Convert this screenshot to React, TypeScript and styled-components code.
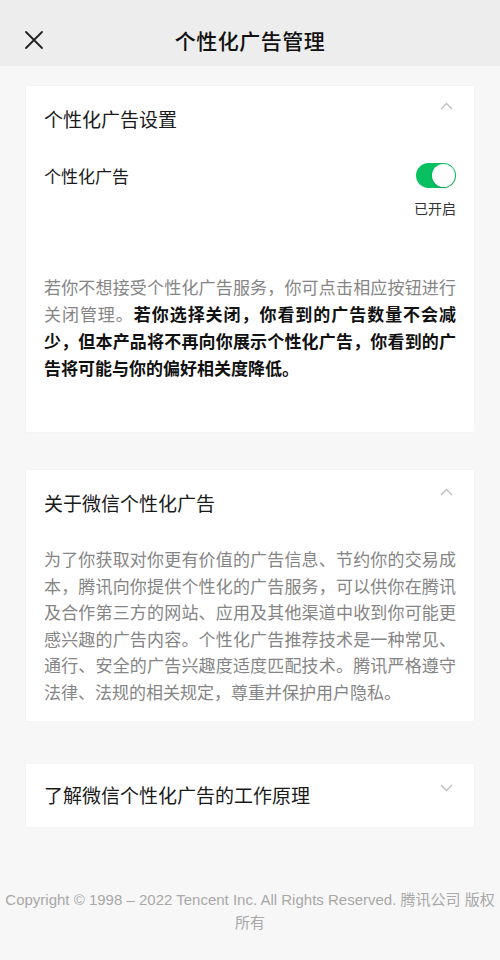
import React, { useState } from 'react'
import styled, { createGlobalStyle } from 'styled-components'

const GlobalStyle = createGlobalStyle`
    html, body {
        margin: 0;
        padding: 0;
        background: #f7f7f7;
        font-family: 'Noto Sans CJK SC', 'Noto Sans', sans-serif;
    }
`

const Page = styled.div`
    min-height: 960px;
    background: #f7f7f7;
`

const Header = styled.div`
    height: 66px;
    box-sizing: border-box;
    padding-top: 14px;
    background: #ededed;
    position: relative;
`

const HeaderRow = styled.div`
    height: 52px;
    display: flex;
    align-items: center;
    justify-content: center;
    position: relative;
`

const CloseButton = styled.button`
    position: absolute;
    left: 20px;
    top: 12px;
    width: 28px;
    height: 28px;
    border: none;
    background: none;
    padding: 0;
    display: flex;
    align-items: center;
    justify-content: center;
`

const HeaderTitle = styled.div`
    font-size: 21px;
    font-weight: 500;
    color: #111;
    letter-spacing: 0.5px;
`

const Main = styled.div`
    padding: 20px 26px 0;
    display: flex;
    flex-direction: column;
`

type CardProps = {
    $pad: string
    $gap?: number
}

const Card = styled.div<CardProps>`
    background: #fff;
    padding: ${(p) => p.$pad};
    margin-bottom: ${(p) => p.$gap ?? 0}px;
    box-shadow: 0 0 2px rgba(0, 0, 0, 0.04);
`

const CardHead = styled.div`
    display: flex;
    justify-content: space-between;
    align-items: flex-start;
`

const CardTitle = styled.div`
    font-size: 19px;
    line-height: 26px;
    color: #1a1a1a;
`

const Chevron = styled.div<{ $top: number }>`
    margin-top: ${(p) => p.$top}px;
    margin-right: 3px;
    width: 13px;
    height: 8px;
    display: flex;
`

const SettingRow = styled.div`
    margin-top: 31px;
    display: flex;
    justify-content: space-between;
    align-items: center;
`

const SettingLabel = styled.div`
    font-size: 17px;
    line-height: 24px;
    color: #1a1a1a;
`

const Toggle = styled.div<{ $on: boolean }>`
    width: 40px;
    height: 25px;
    border-radius: 13px;
    background: ${(p) => (p.$on ? '#07c160' : '#e5e5e5')};
    position: relative;
    cursor: pointer;
    transition: background 200ms;
`

const Knob = styled.div<{ $on: boolean }>`
    position: absolute;
    top: 1px;
    left: ${(p) => (p.$on ? '16px' : '1px')};
    width: 23px;
    height: 23px;
    border-radius: 50%;
    background: #fff;
    box-shadow: 0 1px 2px rgba(0, 0, 0, 0.2);
    transition: left 200ms;
`

const Status = styled.div`
    margin-top: 10px;
    text-align: right;
    font-size: 14px;
    line-height: 20px;
    color: #333;
`

const Paragraph = styled.p<{ $top: number; $lh: number }>`
    margin: ${(p) => p.$top}px 0 0;
    font-size: 17px;
    line-height: ${(p) => p.$lh}px;
    color: #858585;
    text-align: justify;
`

const Strong = styled.span`
    color: #111;
    font-weight: 700;
`

const Footer = styled.div`
    margin-top: 61px;
    padding: 0 4px;
    text-align: center;
    font-family: 'Liberation Sans', 'Noto Sans CJK SC', sans-serif;
    font-size: 15px;
    line-height: 23px;
    color: #a8a8a8;
`

const CloseIcon = () => (
    <svg width="20" height="20" viewBox="0 0 20 20">
        <path
            d="M2 2 L18 18 M18 2 L2 18"
            stroke="#1f1f1f"
            strokeWidth="1.8"
            strokeLinecap="round"
        />
    </svg>
)

const ChevronIcon = ({ up }: { up: boolean }) => (
    <svg width="13" height="8" viewBox="0 0 13 8">
        <path
            d={up ? 'M1 7 L6.5 1.5 L12 7' : 'M1 1 L6.5 6.5 L12 1'}
            fill="none"
            stroke="#bdbdbd"
            strokeWidth="1.3"
        />
    </svg>
)

const App = () => {
    const [on, setOn] = useState(true)
    return (
        <Page>
            <GlobalStyle />
            <Header>
                <HeaderRow>
                    <CloseButton>
                        <CloseIcon />
                    </CloseButton>
                    <HeaderTitle>个性化广告管理</HeaderTitle>
                </HeaderRow>
            </Header>
            <Main>
                <Card $pad="20px 18px 51px" $gap={38}>
                    <CardHead>
                        <CardTitle>个性化广告设置</CardTitle>
                        <Chevron $top={-4}>
                            <ChevronIcon up />
                        </Chevron>
                    </CardHead>
                    <SettingRow>
                        <SettingLabel>个性化广告</SettingLabel>
                        <Toggle $on={on} onClick={() => setOn(!on)}>
                            <Knob $on={on} />
                        </Toggle>
                    </SettingRow>
                    <Status>{on ? '已开启' : '已关闭'}</Status>
                    <Paragraph $top={55} $lh={27}>
                        若你不想接受个性化广告服务，你可点击相应按钮进行关闭管理。
                        <Strong>
                            若你选择关闭，你看到的广告数量不会减少，但本产品将不再向你展示个性化广告，你看到的广告将可能与你的偏好相关度降低。
                        </Strong>
                    </Paragraph>
                </Card>
                <Card $pad="20px 18px 16px" $gap={43}>
                    <CardHead>
                        <CardTitle>关于微信个性化广告</CardTitle>
                        <Chevron $top={-2}>
                            <ChevronIcon up />
                        </Chevron>
                    </CardHead>
                    <Paragraph $top={30} $lh={26.5}>
                        为了你获取对你更有价值的广告信息、节约你的交易成本，腾讯向你提供个性化的广告服务，可以供你在腾讯及合作第三方的网站、应用及其他渠道中收到你可能更感兴趣的广告内容。个性化广告推荐技术是一种常见、通行、安全的广告兴趣度适度匹配技术。腾讯严格遵守法律、法规的相关规定，尊重并保护用户隐私。
                    </Paragraph>
                </Card>
                <Card $pad="18px 18px 19px">
                    <CardHead>
                        <CardTitle>了解微信个性化广告的工作原理</CardTitle>
                        <Chevron $top={2}>
                            <ChevronIcon up={false} />
                        </Chevron>
                    </CardHead>
                </Card>
            </Main>
            <Footer>
                Copyright © 1998 – 2022 Tencent Inc. All Rights Reserved. 腾讯公司 版权所有
            </Footer>
        </Page>
    )
}

export default App
